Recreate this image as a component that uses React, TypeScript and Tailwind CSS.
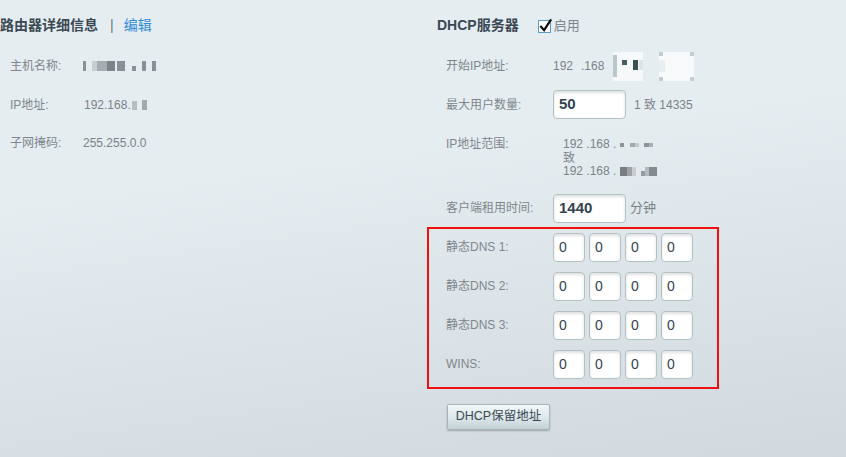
import React from "react";

const labelCls = "text-[12px] text-[#7f868b]";
const valueCls = "text-[12px] text-[#7b8287]";

// pixelated, blurred-out bits of the addresses
function Pixels({ cells }: { cells: { w: number; c: string; h?: number }[] }) {
  return (
    <span className="inline-flex items-end gap-0 align-middle">
      {cells.map((p, i) => (
        <span
          key={i}
          className="inline-block"
          style={{ width: p.w, height: p.h ?? 10, backgroundColor: p.c }}
        />
      ))}
    </span>
  );
}

function Field({ value, w = "w-[73px]", bold = false }: { value: string; w?: string; bold?: boolean }) {
  return (
    <div
      className={`${w} h-[29px] flex items-center pl-[5px] bg-white border border-[#b3c1c5] rounded-[4px] shadow-[inset_0_2px_3px_rgba(0,0,0,0.12)] text-[#33434e] ${
        bold ? "font-bold text-[15px]" : "text-[14px]"
      }`}
    >
      {value}
    </div>
  );
}

function DnsRow({ label }: { label: string }) {
  return (
    <div className="flex items-center h-[29px]">
      <div className={`${labelCls} w-[124px] pl-[17px]`}>{label}</div>
      <div className="flex gap-[4px]">
        {[0, 1, 2, 3].map((i) => (
          <Field key={i} value="0" w="w-[32px]" />
        ))}
      </div>
    </div>
  );
}

export default function App() {
  return (
    <div className="h-[457px] w-full overflow-hidden bg-[linear-gradient(172deg,#e6edf1_35%,#d1d9de_100%)] font-['Liberation_Sans','Noto_Sans_CJK_SC',sans-serif]">
      <div className="flex">
        {/* Router details */}
        <div className="w-[427px] shrink-0">
          <div className="h-[51px] flex items-center text-[14px]">
            <span className="font-bold text-[#394853]">路由器详细信息</span>
            <span className="ml-[12px] mr-[10px] text-[#6b767d]">|</span>
            <span className="text-[#2f8ad6]">编辑</span>
          </div>
          <div className="h-[30px] flex items-center">
            <span className={`${labelCls} w-[83px] pl-[10px]`}>主机名称:</span>
            <Pixels
              cells={[
                { w: 3, c: "#8a9095" },
                { w: 6, c: "transparent" },
                { w: 5, c: "#c9ced1" },
                { w: 10, c: "#a7adb1" },
                { w: 8, c: "#7d8388" },
                { w: 2, c: "transparent" },
                { w: 8, c: "#8a9095" },
                { w: 7, c: "transparent" },
                { w: 4, c: "#8a9095", h: 5 },
                { w: 6, c: "transparent" },
                { w: 4, c: "#8a9095" },
                { w: 6, c: "transparent" },
                { w: 4, c: "#8a9095" },
              ]}
            />
          </div>
          <div className="h-[29px] mt-[9px] flex items-center">
            <span className={`${labelCls} w-[83px] pl-[10px]`}>IP地址:</span>
            <span className={`${valueCls} ml-[1px]`}>192.168.</span>
            <span className="ml-[1px]">
              <Pixels
                cells={[
                  { w: 5, c: "#b7bcbf", h: 9 },
                  { w: 5, c: "transparent" },
                  { w: 5, c: "#a2a8ac" },
                ]}
              />
            </span>
          </div>
          <div className="h-[30px] mt-[9px] flex items-center">
            <span className={`${labelCls} w-[83px] pl-[10px]`}>子网掩码:</span>
            <span className={valueCls}>255.255.0.0</span>
          </div>
        </div>

        {/* DHCP server */}
        <div className="flex-1">
          <div className="h-[51px] flex items-center pl-[10px]">
            <span className="text-[14px] font-bold text-[#394853]">DHCP服务器</span>
            <span className="relative ml-[19px] mt-[2px] w-[13px] h-[13px] bg-white border border-[#5b9cc6]">
              <svg viewBox="0 0 16 16" className="absolute -left-[1px] -top-[4px] w-[15px] h-[16px]">
                <path d="M2.5 9 L6.5 13.5 L14 2" fill="none" stroke="#111" strokeWidth="2.4" />
              </svg>
            </span>
            <span className="ml-[3px] text-[13px] text-[#7f868b]">启用</span>
          </div>

          <div className="h-[30px] flex items-center">
            <span className={`${labelCls} w-[126px] pl-[19px]`}>开始IP地址:</span>
            <span className={valueCls}>192</span>
            <span className={`${valueCls} ml-[8px]`}>.168</span>
            <div className="ml-[9px] relative w-[30px] h-[29px] bg-[#f6f8f9]">
              <span className="absolute left-0 top-[3px] w-[4px] h-[22px] bg-[#b9c6ca]" />
              <span className="absolute left-[9px] top-[8px] w-[5px] h-[5px] bg-[#4a5c65]" />
              <span className="absolute left-[20px] top-[8px] w-[5px] h-[10px] bg-[#3b4d57]" />
              <span className="absolute right-0 top-[8px] w-[4px] h-[10px] bg-[#dde3e5]" />
            </div>
            <div className="ml-[16px] relative w-[35px] h-[29px] bg-[#f7f9fa]">
              <span className="absolute left-0 top-0 w-[4px] h-[4px] bg-[#c3cdd1]" />
              <span className="absolute right-0 top-0 w-[4px] h-[4px] bg-[#c3cdd1]" />
              <span className="absolute left-0 bottom-0 w-[4px] h-[4px] bg-[#c3cdd1]" />
              <span className="absolute right-0 bottom-0 w-[4px] h-[4px] bg-[#c3cdd1]" />
              <span className="absolute left-0 top-[8px] w-[6px] h-[12px] bg-[#eaeef0]" />
            </div>
          </div>

          <div className="h-[29px] mt-[9px] flex items-center">
            <span className={`${labelCls} w-[126px] pl-[19px]`}>最大用户数量:</span>
            <Field value="50" bold />
            <span className={`${valueCls} ml-[8px]`}>1 致 14335</span>
          </div>

          <div className="mt-[19px] flex">
            <span className={`${labelCls} w-[136px] pl-[19px] leading-[13.5px]`}>IP地址范围:</span>
            <div className={`${valueCls} leading-[13.5px]`}>
              <div className="flex items-center">
                192 .168 .
                <span className="ml-[4px]">
                  <Pixels
                    cells={[
                      { w: 4, c: "#8d9397", h: 4 },
                      { w: 6, c: "transparent", h: 4 },
                      { w: 5, c: "#a3a9ad", h: 4 },
                      { w: 4, c: "#c2c7ca", h: 4 },
                      { w: 5, c: "transparent", h: 4 },
                      { w: 5, c: "#8d9397", h: 4 },
                      { w: 4, c: "#a9afb2", h: 4 },
                    ]}
                  />
                </span>
              </div>
              <div>致</div>
              <div className="flex items-center">
                192 .168 .
                <span className="ml-[4px]">
                  <Pixels
                    cells={[
                      { w: 7, c: "#777d82", h: 9 },
                      { w: 5, c: "#9da3a7", h: 9 },
                      { w: 4, c: "#c9cdd0", h: 9 },
                      { w: 5, c: "transparent", h: 9 },
                      { w: 4, c: "#959b9f", h: 5 },
                      { w: 4, c: "#b5babd", h: 9 },
                      { w: 8, c: "#83898e", h: 9 },
                    ]}
                  />
                </span>
              </div>
            </div>
          </div>

          <div className="h-[29px] mt-[15px] flex items-center">
            <span className={`${labelCls} w-[126px] pl-[19px]`}>客户端租用时间:</span>
            <Field value="1440" bold />
            <span className={`${valueCls} ml-[4px] text-[13px]`}>分钟</span>
          </div>

          <div className="mt-[4px] w-[292px] border-2 border-[#f01010] pt-[4px] pb-[8px] flex flex-col gap-[10px]">
            <DnsRow label="静态DNS 1:" />
            <DnsRow label="静态DNS 2:" />
            <DnsRow label="静态DNS 3:" />
            <DnsRow label="WINS:" />
          </div>

          <button className="mt-[15px] ml-[20px] h-[26px] w-[103px] rounded-[2px] border border-[#a8b6bc] bg-[linear-gradient(180deg,#f3f7f8_0%,#dbe6e9_55%,#c3d1d6_100%)] shadow-[0_1px_2px_rgba(0,0,0,0.25)] text-[12.5px] text-[#3a4953]">
            DHCP保留地址
          </button>
        </div>
      </div>
    </div>
  );
}
